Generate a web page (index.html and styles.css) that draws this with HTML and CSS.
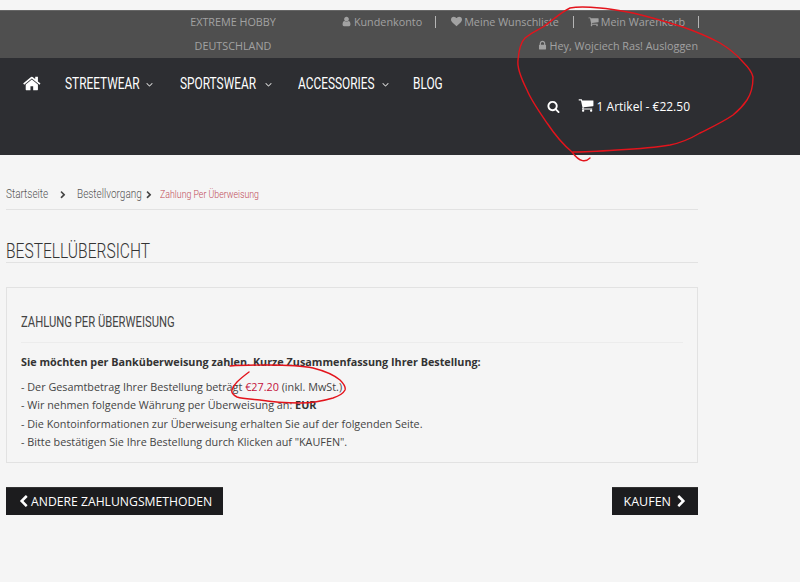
FILE: index.html
```html
<!DOCTYPE html>
<html lang="de">
<head>
<meta charset="utf-8">
<title>Bestellübersicht</title>
<link rel="stylesheet" href="styles.css">
</head>
<body>
<svg class="defs" width="0" height="0" aria-hidden="true">
  <symbol id="i-home" viewBox="0 0 1792 1792"><path d="M1408 992v480q0 26-19 45t-45 19h-384v-384h-256v384h-384q-26 0-45-19t-19-45v-480q0-1 .5-3t.5-3l575-474 575 474q1 2 1 6zm223-69l-62 74q-8 9-21 11h-3q-13 0-21-7l-692-577-692 577q-12 8-24 7-13-2-21-11l-62-74q-8-10-7-23.5t11-21.5l719-599q32-26 76-26t76 26l244 204v-195q0-14 9-23t23-9h192q14 0 23 9t9 23v408l219 182q10 8 11 21.5t-7 23.5z"/></symbol>
  <symbol id="i-user" viewBox="0 0 1792 1792"><path d="M1536 1399q0 109-62.5 187t-150.5 78h-854q-88 0-150.5-78t-62.5-187q0-85 8.5-160.5t31.5-152 58.5-131 94-89 134.5-34.5q131 128 313 128t313-128q76 0 134.5 34.5t94 89 58.5 131 31.5 152 8.5 160.5zm-256-887q0 159-112.5 271.5t-271.5 112.5-271.5-112.5-112.5-271.5 112.5-271.5 271.5-112.5 271.5 112.5 112.5 271.5z"/></symbol>
  <symbol id="i-heart" viewBox="0 0 1792 1792"><path d="M896 1664q-26 0-44-18l-624-602q-10-8-27.5-26t-55.5-65.5-68-97.5-53.5-121-23.5-138q0-220 127-344t351-124q62 0 126.5 21.5t120 58 95.5 68.5 76 68q36-36 76-68t95.5-68.5 120-58 126.5-21.5q224 0 351 124t127 344q0 221-229 450l-623 600q-18 18-44 18z"/></symbol>
  <symbol id="i-cart" viewBox="0 0 1792 1792"><path d="M704 1536q0 52-38 90t-90 38-90-38-38-90 38-90 90-38 90 38 38 90zm896 0q0 52-38 90t-90 38-90-38-38-90 38-90 90-38 90 38 38 90zm128-1088v512q0 24-16.5 42.5t-40.5 21.5l-1044 122q13 60 13 70 0 16-24 64h920q26 0 45 19t19 45-19 45-45 19h-1024q-26 0-45-19t-19-45q0-11 8-31.5t16-36 21.5-40 15.5-29.5l-177-823h-204q-26 0-45-19t-19-45 19-45 45-19h256q16 0 28.5 6.5t19.5 15.5 13 24.5 8 26 5.5 29.5 4.5 26h1201q26 0 45 19t19 45z"/></symbol>
  <symbol id="i-lock" viewBox="0 0 1792 1792"><path d="M640 768h512v-192q0-106-75-181t-181-75-181 75-75 181v192zm832 96v576q0 40-28 68t-68 28h-960q-40 0-68-28t-28-68v-576q0-40 28-68t68-28h32v-192q0-184 132-316t316-132 316 132 132 316v192h32q40 0 68 28t28 68z"/></symbol>
  <symbol id="i-search" viewBox="0 0 1792 1792"><path d="M1216 832q0-185-131.500-316.500t-316.500-131.500-316.500 131.500-131.500 316.500 131.500 316.500 316.500 131.500 316.500-131.500 131.500-316.500zm512 832q0 52-38 90t-90 38q-54 0-90-38l-343-342q-179 124-399 124-143 0-273.500-55.500t-225-150-150-225-55.500-273.500 55.500-273.500 150-225 225-150 273.500-55.500 273.500 55.500 225 150 150 225 55.500 273.500q0 220-124 399l343 343q37 37 37 90z"/></symbol>
  <symbol id="i-left" viewBox="0 0 1792 1792"><path d="M1427 301l-531 531 531 531q19 19 19 45t-19 45l-166 166q-19 19-45 19t-45-19l-742-742q-19-19-19-45t19-45l742-742q19-19 45-19t45 19l166 166q19 19 19 45t-19 45z"/></symbol>
  <symbol id="i-right" viewBox="0 0 1792 1792"><path d="M1363 877l-742 742q-19 19-45 19t-45-19l-166-166q-19-19-19-45t19-45l531-531-531-531q-19-19-19-45t19-45l166-166q19-19 45-19t45 19l742 742q19 19 19 45t-19 45z"/></symbol>
  <symbol id="i-down" viewBox="0 0 1792 1792"><path d="M1395 736q0 13-10 23l-466 466q-10 10-23 10t-23-10l-466-466q-10-10-10-23t10-23l50-50q10-10 23-10t23 10l393 393 393-393q10-10 23-10t23 10l50 50q10 10 10 23z"/></symbol>
</svg>

<header class="header">
  <div class="topbar">
    <div class="brand">EXTREME HOBBY<br>DEUTSCHLAND</div>
    <div class="account">
      <ul class="account-links">
        <li class="account-item item-konto"><svg class="ic"><use href="#i-user"/></svg>Kundenkonto</li>
        <li class="account-item item-wish"><svg class="ic"><use href="#i-heart"/></svg>Meine Wunschliste</li>
        <li class="account-item item-cart"><svg class="ic"><use href="#i-cart"/></svg>Mein Warenkorb</li>
      </ul>
      <div class="login"><svg class="ic"><use href="#i-lock"/></svg>Hey, Wojciech Ras! Ausloggen</div>
    </div>
  </div>
  <nav class="nav">
    <ul class="menu">
      <li class="menu-home"><svg class="ic-home"><use href="#i-home"/></svg></li>
      <li class="menu-item m1"><span class="menu-text t1">STREETWEAR</span><svg class="ic-down"><use href="#i-down"/></svg></li>
      <li class="menu-item m2"><span class="menu-text t2">SPORTSWEAR</span><svg class="ic-down"><use href="#i-down"/></svg></li>
      <li class="menu-item m3"><span class="menu-text t3">ACCESSORIES</span><svg class="ic-down"><use href="#i-down"/></svg></li>
      <li class="menu-item"><span class="menu-text">BLOG</span></li>
    </ul>
    <div class="shop">
      <svg class="ic-search"><use href="#i-search"/></svg>
      <svg class="ic-basket"><use href="#i-cart"/></svg>
      <span>1 Artikel - €22.50</span>
    </div>
  </nav>
</header>

<main class="main">
  <div class="crumbs">
    <span class="crumb c1"><span class="narrow">Startseite</span></span><svg class="crumb-sep sep-a"><use href="#i-right"/></svg><span class="crumb c2"><span class="narrow">Bestellvorgang</span></span><svg class="crumb-sep sep-b"><use href="#i-right"/></svg><span class="crumb crumb-now"><span class="narrow">Zahlung Per Überweisung</span></span>
  </div>
  <h1 class="page-title"><span class="title-text">BESTELLÜBERSICHT</span></h1>
  <section class="panel">
    <h2 class="panel-title"><span class="panel-text">ZAHLUNG PER ÜBERWEISUNG</span></h2>
    <p class="lead">Sie möchten per Banküberweisung zahlen. Kurze Zusammenfassung Ihrer Bestellung:</p>
    <p class="info">- Der Gesamtbetrag Ihrer Bestellung beträgt <span class="price">€27.20</span> (inkl. MwSt.)<br>
    - Wir nehmen folgende Währung per Überweisung an: <b>EUR</b><br>
    - Die Kontoinformationen zur Überweisung erhalten Sie auf der folgenden Seite.<br>
    - Bitte bestätigen Sie Ihre Bestellung durch Klicken auf "KAUFEN".</p>
  </section>
  <div class="actions">
    <a class="btn btn-back"><svg class="ic-btn"><use href="#i-left"/></svg>ANDERE ZAHLUNGSMETHODEN</a>
    <a class="btn btn-buy">KAUFEN<svg class="ic-btn"><use href="#i-right"/></svg></a>
  </div>
</main>

<svg class="scribble" width="800" height="582" viewBox="0 0 800 582" aria-hidden="true">
  <path d="M590 158 C586 162 580 163 572 152 C560 142 553 132 547 123 C538 110 531 100 527 90 C520 76 517 66 518 60 C519 48 521 42 525 38 C532 32 538 30 543 27 C552 21 561 12 570 8 C580 6 590 7 600 8 C612 9 622 11 633 13 C650 17 667 22 683 27 C697 32 709 37 720 43 C730 49 737 55 743 62 C749 68 752 72 753 77 C753 86 751 94 747 100 C743 106 738 111 733 115 C723 122 712 127 700 133 C690 139 680 143 670 145 C652 148 635 149 617 150 C602 151 587 152 573 152"/>
  <path d="M230 366 C243 365 255 365 267 365 C283 365 299 365 313 368 C325 371 334 375 340 380 C344 384 346 387 345 390 C343 394 339 396 333 398 C323 401 311 403 300 403 C286 403 272 402 260 400 C251 399 243 399 237 397 C233 395 231 392 232 390 C233 386 235 384 237 382 C241 378 245 375 249 372"/>
</svg>
</body>
</html>
```
FILE: styles.css
```css
* { box-sizing: border-box; }
html, body { margin: 0; padding: 0; }
body {
  width: 800px;
  height: 582px;
  overflow: hidden;
  background: #f5f5f5;
  padding-top: 10px;
  font-family: "Open Sans", sans-serif;
  color: #444;
  position: relative;
}
.defs { position: absolute; }
ul { list-style: none; margin: 0; padding: 0; }
.ic { width: 11px; height: 11px; fill: currentColor; margin-right: 2px; vertical-align: -1px; }

.topbar {
  height: 48px;
  background: #4f4f4f;
  border-top: 1px solid #666;
  display: flex;
  color: #a2a2a2;
  font-size: 10.8px;
}
.brand {
  width: 170px;
  margin-left: 148px;
  text-align: center;
  line-height: 24px;
  margin-top: -1px;
}
.account {
  width: 380px;
  display: flex;
  flex-direction: column;
  align-items: flex-end;
  line-height: 24px;
  margin-top: -1px;
}
.account-links { display: flex; height: 24px; margin-right: -1px; }
.account-item { position: relative; }
.item-konto { margin-right: 15px; padding-right: 14px; }
.item-wish { margin-right: 14px; padding-right: 15px; }
.item-cart { padding-right: 14px; }
.account-item::after {
  content: "";
  position: absolute;
  right: 0;
  top: 6px;
  height: 12px;
  border-right: 1px solid #b5b5b5;
}
.login { height: 24px; }

.nav {
  height: 97px;
  background: #2d2e32;
  color: #fff;
}
.menu {
  display: flex;
  height: 47px;
  padding-left: 23px;
  font-family: Roboto, sans-serif;
  font-size: 16.5px;
  line-height: 52px;
}
.menu-home { width: 42px; }
.ic-home { width: 19px; height: 19px; fill: #fff; margin-top: 16px; display: block; }
.menu-item { display: flex; white-space: nowrap; }
.menu-text {
  display: inline-block;
  transform: scaleX(0.72);
  transform-origin: left center;
}
.m1 { width: 115px; }
.m2 { width: 118px; }
.m3 { width: 115px; }
.t1 { width: 79px; }
.t2 { width: 83px; }
.t3 { width: 82px; }
.ic-down { width: 11px; height: 11px; fill: #ddd; margin-top: 21px; }
.shop {
  display: flex;
  align-items: center;
  width: 698px;
  padding-right: 8px;
  justify-content: flex-end;
  height: 24px;
  margin-top: -11px;
  font-size: 12px;
}
.ic-search { width: 13px; height: 13px; fill: #fff; margin-right: 18px; }
.ic-basket { width: 16px; height: 16px; fill: #fff; margin-right: 3px; margin-top: -2px; }

.main { width: 698px; padding-left: 6px; }
.crumbs {
  margin-top: 30px;
  height: 25px;
  line-height: 18px;
  border-bottom: 1px solid #e2e2e2;
  font-family: Roboto, sans-serif;
  font-weight: 300;
  font-size: 12.5px;
  color: #555;
  display: flex;
  white-space: nowrap;
}
.narrow {
  display: inline-block;
  transform: scaleX(0.8);
  transform-origin: left center;
}
.crumb-sep { width: 8px; height: 8px; fill: #444; margin-top: 6px; }
.c1 { width: 43px; }
.c2 { width: 65px; }
.sep-a { margin: 6px 10px 0 10px; }
.sep-b { margin: 6px 7px 0 3px; }
.crumb-now { color: #c04a55; font-size: 11px; padding-top: 1px; }
.page-title {
  margin: 29px 0 0;
  height: 24px;
  line-height: 24px;
  font-family: Roboto, sans-serif;
  font-weight: 300;
  font-size: 20.5px;
  color: #333;
  border-bottom: 1px solid #e2e2e2;
  white-space: nowrap;
}
.title-text {
  display: inline-block;
  transform: scaleX(0.76);
  transform-origin: left center;
}
.panel {
  margin-top: 24px;
  height: 176px;
  border: 1px solid #e2e2e2;
  padding: 0 14px;
}
.panel-title {
  margin: 0;
  padding-top: 24px;
  height: 55px;
  line-height: 20px;
  font-family: Roboto, sans-serif;
  font-weight: 400;
  font-size: 15px;
  color: #444;
  border-bottom: 1px solid #ececec;
  white-space: nowrap;
}
.panel-text {
  display: inline-block;
  transform: scaleX(0.75);
  transform-origin: left center;
}
.lead {
  margin: 10px 0 0;
  font-size: 10.8px;
  font-weight: 700;
  line-height: 18px;
  color: #333;
}
.info {
  margin: 7px 0 0;
  font-size: 10.8px;
  line-height: 18.4px;
  color: #444;
}
.info b { color: #333; }
.price { color: #c4103a; }
.actions {
  display: flex;
  justify-content: space-between;
  margin-top: 24px;
}
.btn {
  height: 28px;
  padding: 0 12px;
  display: flex;
  align-items: center;
  background: #1c1c1e;
  color: #fff;
  font-size: 12.2px;
  border-top: 1px solid #333;
}
.ic-btn { width: 13px; height: 13px; fill: #fff; }
.btn-back { padding-right: 11px; }
.btn-back .ic-btn { margin: 0 1px 0 -1px; }
.btn-buy { font-size: 12.5px; padding-right: 10px; }
.btn-buy .ic-btn { margin-left: 4px; }

.scribble {
  position: absolute;
  left: 0;
  top: 0;
  pointer-events: none;
  fill: none;
  stroke: #e3141c;
  stroke-width: 1.4;
  stroke-linecap: round;
}
```
